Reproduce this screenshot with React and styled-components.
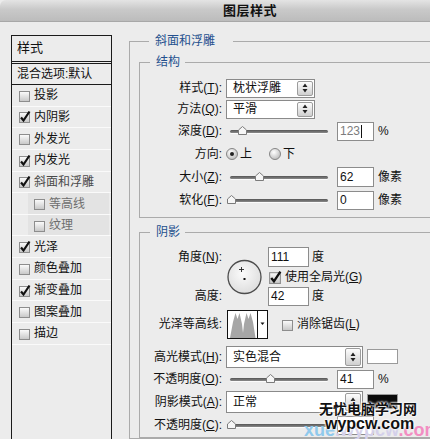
import React from 'react';
import styled, { createGlobalStyle } from 'styled-components';

const GlobalStyle = createGlobalStyle`
	html, body {
		margin: 0;
		padding: 0;
		background: #ececec;
	}
	body {
		font-family: 'Liberation Sans', 'Noto Sans CJK SC', sans-serif;
	}
`;

const Window = styled.div`
	position: relative;
	width: 430px;
	height: 439px;
	overflow: hidden;
	background: #ececec;
	color: #111;
	font-size: 12px;
	line-height: 14px;
`;

const TitleBar = styled.div`
	height: 22px;
	box-sizing: border-box;
	display: flex;
	align-items: center;
	justify-content: center;
	padding-left: 70px;
	border-bottom: 1px solid #a8a8a8;
	border-top-left-radius: 6px;
	background: linear-gradient(#e4e4e4 0%, #c9c9c9 45%, #bcbcbc 100%);
	font-size: 13px;
	font-weight: bold;
	letter-spacing: 0.5px;
`;

const Body = styled.div`
	display: flex;
	align-items: flex-start;
`;

const Sidebar = styled.div`
	margin: 13px 0 0 11px;
	width: 101px;
	height: 430px;
	flex-shrink: 0;
	box-sizing: border-box;
	border: 1px solid #1b1b1b;
	font-size: 12px;
	white-space: nowrap;
`;

const SideHeader = styled.div`
	height: 28px;
	box-sizing: border-box;
	display: flex;
	align-items: center;
	padding: 0 0 2px 5px;
	border-bottom: 3px double #1b1b1b;
	font-size: 13px;
`;

const BlendRow = styled.div`
	height: 21px;
	box-sizing: border-box;
	display: flex;
	align-items: center;
	padding-left: 5px;
	border-bottom: 1px solid #1b1b1b;
`;

const LayerRow = styled.div`
	height: 21.65px;
	box-sizing: border-box;
	display: flex;
	align-items: stretch;
	padding-left: ${p => (p.$sub ? 16 : 6)}px;
	padding-right: ${p => (p.$sub ? 2 : 0)}px;
	border-bottom: 1px solid #fafafa;
	color: ${p => (p.$sub ? '#6e6e6e' : p.$dim ? '#4a4a4a' : '#111')};
`;

const LayerCell = styled.div`
	flex: 1;
	display: flex;
	align-items: center;
	gap: 3px;
	padding-left: ${p => (p.$sub ? 5 : 0)}px;
	background: ${p => (p.$sub ? '#e3e3e3' : 'transparent')};
`;

const Panel = styled.div`
	margin: 12px 0 0 17px;
	width: 330px;
	flex-shrink: 0;
`;

const Group = styled.fieldset`
	margin: ${p => p.$margin || '0'};
	padding: ${p => p.$pad || '0'};
	border: 1px solid #ababab;
	min-width: 0;
`;

const Legend = styled.legend`
	margin-left: 10px;
	padding: 0 ${p => (p.$wide ? 18 : 5)}px 0 6px;
	color: #24508e;
	font-size: 12px;
	line-height: 14px;
`;

const Row = styled.div`
	height: ${p => p.$h}px;
	margin-top: ${p => p.$mt || 0}px;
	display: flex;
	align-items: center;
`;

const Label = styled.span`
	width: 82px;
	flex-shrink: 0;
	text-align: right;
	white-space: nowrap;
	margin-right: 4px;
`;

const Select = styled.div`
	width: ${p => p.$w}px;
	height: ${p => p.$h}px;
	flex-shrink: 0;
	box-sizing: border-box;
	border: 1px solid #8a8a8a;
	background: #fff;
	display: flex;
	align-items: stretch;
`;

const SelectText = styled.span`
	flex: 1;
	display: flex;
	align-items: center;
	padding-left: 6px;
`;

const Spinner = styled.span`
	width: 14px;
	margin: 1px;
	border: 1px solid #9c9c9c;
	border-radius: 2px;
	background: linear-gradient(#fdfdfd, #cfcfcf);
	display: flex;
	align-items: center;
	justify-content: center;
`;

const Field = styled.div`
	width: ${p => p.$w}px;
	height: ${p => p.$h}px;
	flex-shrink: 0;
	box-sizing: border-box;
	border: 1px solid #8c8c8c;
	background: #fff;
	display: flex;
	align-items: center;
	padding-left: 2px;
	color: ${p => (p.$muted ? '#7c7c7c' : '#111')};
`;

const Caret = styled.span`
	width: 1px;
	height: 13px;
	margin-left: 1px;
	background: #111;
`;

const Unit = styled.span`
	margin-left: ${p => p.$ml || 4}px;
`;

const Track = styled.div`
	position: relative;
	width: 98px;
	height: 3px;
	flex-shrink: 0;
	margin: 0 9px 0 4px;
	border-radius: 2px;
	background: linear-gradient(#555, #8a8a8a);
	box-shadow: 0 1px 0 #fbfbfb;
`;

const Thumb = styled.span`
	position: absolute;
	top: -4px;
	display: flex;
`;

const RadioLabel = styled.span`
	display: flex;
	align-items: center;
	gap: 2px;
	margin-right: ${p => p.$mr || 0}px;
`;

const AngleGrid = styled.div`
	display: grid;
	grid-template-columns: 86px 42px auto;
	grid-template-rows: 22px 17px 22px;
	align-items: center;
`;

const Dial = styled.div`
	grid-column: 2;
	grid-row: 1 / 4;
	display: flex;
	padding-left: 1px;
`;

const CheckLabel = styled.span`
	display: flex;
	align-items: center;
	gap: 3px;
	margin-left: ${p => p.$ml || 0}px;
	white-space: nowrap;
`;

const Contour = styled.div`
	margin-left: 1px;
	display: flex;
`;

const Swatch = styled.div`
	width: 31px;
	height: 15px;
	margin-left: 4px;
	flex-shrink: 0;
	box-sizing: border-box;
	border: 1px solid #9a9a9a;
	background: ${p => p.$color};
`;

const Watermark = styled.div`
	position: absolute;
	left: 300px;
	top: 400px;
	width: 130px;
	font-weight: bold;
	text-shadow: 0 0 2px #fff, 0 0 2px #fff, 0 0 3px #fff;
`;

const MarkCn = styled.div`
	margin-left: 19px;
	font-family: 'Noto Sans CJK SC', sans-serif;
	font-size: 14px;
	line-height: 17px;
	color: #111;
	position: relative;
	z-index: 1;
`;

const MarkEn = styled.div`
	margin-left: 25px;
	font-family: 'Liberation Sans', sans-serif;
	font-size: 16px;
	line-height: 13px;
	color: #111;
	position: relative;
	z-index: 1;
`;

const MarkBack = styled.div`
	margin-top: -9px;
	margin-left: 4px;
	font-family: 'Liberation Sans', sans-serif;
	font-size: 18px;
	line-height: 18px;
	white-space: nowrap;
	text-shadow: none;

	span:nth-child(1) { color: #8fc9ec; }
	span:nth-child(2) { color: #d4d0ea; }
	span:nth-child(3) { color: #f28dc2; }
`;

function Box({ on, size = 11 }) {
	return (
		<svg width={size + 2} height={size + 2} viewBox="0 0 13 13">
			<defs>
				<linearGradient id="boxg" x1="0" y1="0" x2="0" y2="1">
					<stop offset="0" stopColor="#fdfdfd" />
					<stop offset="1" stopColor="#c6c6c6" />
				</linearGradient>
			</defs>
			<rect x="1.5" y="2.5" width="10" height="10" fill="url(#boxg)" stroke="#8d8d8d" />
			{on && (
				<path d="M3 7.5 L5.5 10.5 L11.5 1.5" stroke="#111" strokeWidth="2.2" fill="none" />
			)}
		</svg>
	);
}

function Radio({ on }) {
	return (
		<svg width="12" height="12" viewBox="0 0 12 12">
			<defs>
				<radialGradient id="radg" cx="0.4" cy="0.35" r="0.7">
					<stop offset="0" stopColor="#ffffff" />
					<stop offset="1" stopColor="#b9b9b9" />
				</radialGradient>
			</defs>
			<circle cx="6" cy="6" r="5.5" fill="url(#radg)" stroke="#868686" />
			{on && <circle cx="6" cy="6" r="2" fill="#222" />}
		</svg>
	);
}

function Updown() {
	return (
		<svg width="6" height="10" viewBox="0 0 6 10">
			<path d="M3 0.5 L5.5 4 L0.5 4 Z M3 9.5 L5.5 6 L0.5 6 Z" fill="#222" />
		</svg>
	);
}

function Slider({ pos }) {
	return (
		<Track>
			<Thumb style={{ left: pos - 4 }}>
				<svg width="9" height="9" viewBox="0 0 9 9">
					<path
						d="M4.5 0.5 L8.5 4 L8.5 8.5 L0.5 8.5 L0.5 4 Z"
						fill="#f6f6f6"
						stroke="#7b7b7b"
						strokeLinejoin="round"
					/>
				</svg>
			</Thumb>
		</Track>
	);
}

function AngleDial() {
	return (
		<svg width="36" height="36" viewBox="0 0 36 36">
			<defs>
				<radialGradient id="dialg" cx="0.45" cy="0.4" r="0.6">
					<stop offset="0" stopColor="#fbfbfb" />
					<stop offset="1" stopColor="#dedede" />
				</radialGradient>
			</defs>
			<circle cx="17.5" cy="18" r="16.5" fill="url(#dialg)" stroke="#4c4c4c" strokeWidth="1.3" />
			<path d="M14.5 8 V13 M12 10.5 H17" stroke="#222" strokeWidth="0.9" />
			<rect x="16.5" y="19" width="2" height="2" fill="#111" />
		</svg>
	);
}

function ContourPreview() {
	return (
		<svg width="41" height="29" viewBox="0 0 41 29">
			<rect x="0.5" y="0.5" width="40" height="28" fill="#fff" stroke="#111" />
			<polygon
				points="3,28 6,12 8.5,3 10.5,9 12.5,3 15,14 16,23 17,14 19.5,3 21.5,9 23.5,3 26,12 28.5,28"
				fill="#a6a6a6"
			/>
			<line x1="30.5" y1="1" x2="30.5" y2="28" stroke="#111" />
			<path d="M33.5 12.5 H37.5 L35.5 15 Z" fill="#111" />
		</svg>
	);
}

const layers = [
	{ name: '投影' },
	{ name: '内阴影', on: true },
	{ name: '外发光' },
	{ name: '内发光', on: true },
	{ name: '斜面和浮雕', on: true, dim: true },
	{ name: '等高线', sub: true },
	{ name: '纹理', sub: true },
	{ name: '光泽', on: true },
	{ name: '颜色叠加' },
	{ name: '渐变叠加', on: true },
	{ name: '图案叠加' },
	{ name: '描边' },
];

export default function App() {
	return (
		<Window>
			<GlobalStyle />
			<TitleBar>图层样式</TitleBar>
			<Body>
				<Sidebar>
					<SideHeader>样式</SideHeader>
					<BlendRow>混合选项:默认</BlendRow>
					{layers.map(layer => (
						<LayerRow key={layer.name} $sub={layer.sub} $dim={layer.dim}>
							<LayerCell $sub={layer.sub}>
								<Box on={layer.on} />
								<span>{layer.name}</span>
							</LayerCell>
						</LayerRow>
					))}
				</Sidebar>

				<Panel>
					<Group $pad="7px 0 0 9px">
						<Legend $wide>斜面和浮雕</Legend>

						<Group $pad="9px 0 6px 0">
							<Legend>结构</Legend>
							<Row $h={20}>
								<Label>样式(<u>T</u>):</Label>
								<Select $w={89} $h={19}>
									<SelectText>枕状浮雕</SelectText>
									<Spinner><Updown /></Spinner>
								</Select>
							</Row>
							<Row $h={22}>
								<Label>方法(<u>Q</u>):</Label>
								<Select $w={89} $h={19}>
									<SelectText>平滑</SelectText>
									<Spinner><Updown /></Spinner>
								</Select>
							</Row>
							<Row $h={22}>
								<Label>深度(<u>D</u>):</Label>
								<Slider pos={12} />
								<Field $w={37} $h={19} $muted>
									123<Caret />
								</Field>
								<Unit>%</Unit>
							</Row>
							<Row $h={23}>
								<Label>方向:</Label>
								<RadioLabel $mr={17}>
									<Radio on />上
								</RadioLabel>
								<RadioLabel>
									<Radio />下
								</RadioLabel>
							</Row>
							<Row $h={24}>
								<Label>大小(<u>Z</u>):</Label>
								<Slider pos={29} />
								<Field $w={37} $h={20}>62</Field>
								<Unit>像素</Unit>
							</Row>
							<Row $h={22}>
								<Label>软化(<u>F</u>):</Label>
								<Slider pos={1} />
								<Field $w={37} $h={19}>0</Field>
								<Unit>像素</Unit>
							</Row>
						</Group>

						<Group $margin="7px 0 0 0" $pad="7px 0 0 0">
							<Legend>阴影</Legend>
							<AngleGrid>
								<Label>角度(<u>N</u>):</Label>
								<Dial><AngleDial /></Dial>
								<Row $h={22}>
									<Field $w={41} $h={20}>111</Field>
									<Unit $ml={3}>度</Unit>
								</Row>
								<CheckLabel style={{ gridColumn: 3, gridRow: 2 }}>
									<Box on size={12} />
									<span>使用全局光(<u>G</u>)</span>
								</CheckLabel>
								<Label style={{ gridColumn: 1, gridRow: 3 }}>高度:</Label>
								<Row $h={22} style={{ gridColumn: 3, gridRow: 3 }}>
									<Field $w={41} $h={19}>42</Field>
									<Unit $ml={3}>度</Unit>
								</Row>
							</AngleGrid>
							<Row $h={34}>
								<Label>光泽等高线:</Label>
								<Contour><ContourPreview /></Contour>
								<CheckLabel $ml={13}>
									<Box />
									<span>消除锯齿(<u>L</u>)</span>
								</CheckLabel>
							</Row>
							<Row $h={23} $mt={4}>
								<Label>高光模式(<u>H</u>):</Label>
								<Select $w={137} $h={22}>
									<SelectText>实色混合</SelectText>
									<Spinner><Updown /></Spinner>
								</Select>
								<Swatch $color="#fff" />
							</Row>
							<Row $h={22}>
								<Label>不透明度(<u>O</u>):</Label>
								<Slider pos={40} />
								<Field $w={37} $h={19}>41</Field>
								<Unit>%</Unit>
							</Row>
							<Row $h={23}>
								<Label>阴影模式(<u>A</u>):</Label>
								<Select $w={137} $h={22}>
									<SelectText>正常</SelectText>
									<Spinner><Updown /></Spinner>
								</Select>
								<Swatch $color="#0a0a0a" />
							</Row>
							<Row $h={24}>
								<Label>不透明度(<u>C</u>):</Label>
								<Slider pos={1} />
								<Field $w={37} $h={19} />
							</Row>
						</Group>
					</Group>
				</Panel>
			</Body>

			<Watermark>
				<MarkCn>无忧电脑学习网</MarkCn>
				<MarkEn>wypcw.com</MarkEn>
				<MarkBack>
					<span>xue</span>
					<span>.wypcw</span>
					<span>.com</span>
				</MarkBack>
			</Watermark>
		</Window>
	);
}
